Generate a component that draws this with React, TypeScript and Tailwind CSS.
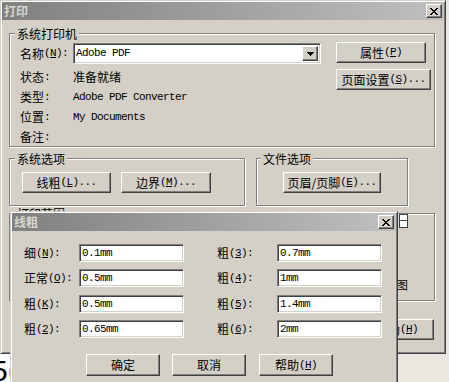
import React from "react";

const cjk = "font-['Noto_Sans_CJK_SC',sans-serif] text-[12px]";
const mono = "font-['Liberation_Mono',monospace] text-[11px] tracking-[-0.6px]";
const raised =
  "bg-[#d4d0c8] border border-t-white border-l-white border-r-[#404040] border-b-[#404040] shadow-[inset_-1px_-1px_0_#808080]";
const sunken =
  "bg-white border border-t-[#808080] border-l-[#808080] border-r-white border-b-white shadow-[inset_1px_1px_0_#404040,inset_-1px_-1px_0_#d4d0c8]";
const frame =
  "bg-[#d4d0c8] border border-t-[#d4d0c8] border-l-[#d4d0c8] border-r-[#404040] border-b-[#404040] shadow-[inset_1px_1px_0_#ffffff,inset_-1px_-1px_0_#808080] p-[1px]";
const group = "border border-[#808080] shadow-[1px_1px_0_#ffffff,inset_1px_1px_0_#ffffff]";
const legend = "font-['Noto_Sans_CJK_SC',sans-serif] text-[12px] leading-[13px] px-[2px] bg-[#d4d0c8] text-black";

// (N): style mnemonic, half-width like the old bitmap font
function Key({ k, tail = "" }: { k: string; tail?: string }) {
  return (
    <span className={mono}>
      (<span className="underline underline-offset-[1px]">{k}</span>){tail}
    </span>
  );
}

function CloseX() {
  return (
    <svg width="8" height="7" viewBox="0 0 8 7" shapeRendering="crispEdges">
      <path
        fill="#000"
        d="M0 0h2v1H0z M6 0h2v1H6z M1 1h2v1H1z M5 1h2v1H5z M2 2h4v1H2z M3 3h2v1H3z M2 4h4v1H2z M1 5h2v1H1z M5 5h2v1H5z M0 6h2v1H0z M6 6h2v1H6z"
      />
    </svg>
  );
}

function TitleBar({ title }: { title: string }) {
  return (
    <div className="h-[18px] flex items-center justify-between bg-linear-to-r from-[#808080] to-[#c0c0c0] pl-[2px] pr-[2px]">
      <span className={cjk + " font-bold leading-[18px] text-[#d8d6d0]"}>{title}</span>
      <div className={raised + " w-[16px] h-[14px] flex items-center justify-center"}>
        <CloseX />
      </div>
    </div>
  );
}

function Btn({ w, h = "h-[21px]", children }: { w: string; h?: string; children: React.ReactNode }) {
  return (
    <div className={raised + " " + w + " " + h + " flex items-center justify-center text-black"}>
      {children}
    </div>
  );
}

function InfoRow({ label, children }: { label: string; children: React.ReactNode }) {
  return (
    <div className="flex items-center h-[20px] text-black">
      <span className="w-[53px] flex items-center">
        <span className={cjk}>{label}</span>
        <span className={mono}>:</span>
      </span>
      {children}
    </div>
  );
}

function Field({ value }: { value: string }) {
  return (
    <div className={sunken + " w-[105px] h-[18px] flex items-center pl-[2px]"}>
      <span className={mono + " text-black"}>{value}</span>
    </div>
  );
}

function ThickRow({ l, lk, lv, r, rk, rv, mt }: { l: string; lk: string; lv: string; r: string; rk: string; rv: string; mt: string }) {
  return (
    <div className={"flex items-center h-[18px] text-black " + mt}>
      <span className="w-[55px] flex items-center">
        <span className={cjk}>{l}</span>
        <Key k={lk} tail=":" />
      </span>
      <Field value={lv} />
      <span className="ml-[33px] w-[60px] flex items-center">
        <span className={cjk}>{r}</span>
        <Key k={rk} tail=":" />
      </span>
      <Field value={rv} />
    </div>
  );
}

function MainDialog() {
  return (
    <div className={frame + " w-[446px] h-[354px] flex flex-col"}>
      <TitleBar title="打印" />

      {/* 系统打印机 */}
      <fieldset className={group + " ml-[7px] mt-[7px] w-[426px] h-[120px]"}>
        <legend className={legend + " ml-[5px]"}>系统打印机</legend>
        <div className="flex pl-[10px]">
          <div className="flex flex-col pt-[3px] w-[301px]">
            <div className="flex items-center h-[21px] text-black">
              <span className="w-[53px] flex items-center">
                <span className={cjk}>名称</span>
                <Key k="N" tail=":" />
              </span>
              <div className={sunken + " w-[248px] h-[21px] flex items-stretch p-[2px]"}>
                <span className={mono + " flex-1 flex items-center pl-[0px] text-black"}>Adobe PDF</span>
                <div className={raised + " w-[16px] flex items-center justify-center"}>
                  <svg width="7" height="4" viewBox="0 0 7 4" shapeRendering="crispEdges">
                    <path fill="#000" d="M0 0h7v1H0z M1 1h5v1H1z M2 2h3v1H2z M3 3h1v1H3z" />
                  </svg>
                </div>
              </div>
            </div>
            <div className="mt-[3px]">
              <InfoRow label="状态">
                <span className={cjk}>准备就绪</span>
              </InfoRow>
              <InfoRow label="类型">
                <span className={mono}>Adobe PDF Converter</span>
              </InfoRow>
              <InfoRow label="位置">
                <span className={mono}>My Documents</span>
              </InfoRow>
              <InfoRow label="备注">
                <span />
              </InfoRow>
            </div>
          </div>
          <div className="ml-[15px] pt-[2px] flex flex-col gap-[6px]">
            <Btn w="w-[90px]">
              <span className={cjk}>属性</span>
              <Key k="P" />
            </Btn>
            <Btn w="w-[95px]">
              <span className={cjk}>页面设置</span>
              <Key k="S" tail="..." />
            </Btn>
          </div>
        </div>
      </fieldset>

      {/* 系统选项 / 文件选项 */}
      <div className="flex ml-[7px] mt-[5px]">
        <fieldset className={group + " w-[236px] h-[54px]"}>
          <legend className={legend + " ml-[5px]"}>系统选项</legend>
          <div className="flex gap-[10px] pl-[12px] pt-[7px]">
            <Btn w="w-[89px]">
              <span className={cjk}>线粗</span>
              <Key k="L" tail="..." />
            </Btn>
            <Btn w="w-[90px]">
              <span className={cjk}>边界</span>
              <Key k="M" tail="..." />
            </Btn>
          </div>
        </fieldset>
        <fieldset className={group + " ml-[11px] w-[152px] h-[54px]"}>
          <legend className={legend + " ml-[4px]"}>文件选项</legend>
          <div className="flex justify-center pt-[7px]">
            <Btn w="w-[98px]">
              <span className={cjk}>页眉/页脚</span>
              <Key k="E" tail="..." />
            </Btn>
          </div>
        </fieldset>
      </div>

      {/* 打印范围, mostly hidden by the 线粗 window */}
      <fieldset className={group + " ml-[7px] mt-[1px] w-[426px] h-[94px]"}>
        <legend className={legend + " ml-[5px]"}>打印范围</legend>
        <div className="flex flex-col items-end pr-[26px]">
          <div className="-mt-[6px] w-[9px] h-[14px] flex flex-col">
            <div className="h-[7px] border border-[#404040] bg-white" />
            <div className="h-[7px] border border-[#404040] border-t-0 bg-white" />
          </div>
          <span className={cjk + " mt-[51px] leading-[12px] text-black"}>图</span>
        </div>
      </fieldset>

      <div className="flex justify-end pr-[10px] mt-[18px]">
        <Btn w="w-[74px]">
          <span className={cjk}>帮助</span>
          <Key k="H" />
        </Btn>
      </div>
    </div>
  );
}

function LineDialog() {
  return (
    <div className={frame + " absolute left-[10px] top-[211px] w-[388px] h-[180px] flex flex-col"}>
      <TitleBar title="线粗" />
      <div className="pl-[12px] mt-[13px] flex flex-col">
        <ThickRow l="细" lk="N" lv="0.1mm" r="粗" rk="3" rv="0.7mm" mt="" />
        <ThickRow l="正常" lk="O" lv="0.5mm" r="粗" rk="4" rv="1mm" mt="mt-[7px]" />
        <ThickRow l="粗" lk="K" lv="0.5mm" r="粗" rk="5" rv="1.4mm" mt="mt-[8px]" />
        <ThickRow l="粗" lk="2" lv="0.65mm" r="粗" rk="6" rv="2mm" mt="mt-[7px]" />
      </div>
      <div className="flex pl-[74px] mt-[16px]">
        <Btn w="w-[74px]" h="h-[22px]">
          <span className={cjk}>确定</span>
        </Btn>
        <div className="ml-[12px]">
          <Btn w="w-[74px]" h="h-[22px]">
            <span className={cjk}>取消</span>
          </Btn>
        </div>
        <div className="ml-[13px]">
          <Btn w="w-[74px]" h="h-[22px]">
            <span className={cjk}>帮助</span>
            <Key k="H" />
          </Btn>
        </div>
      </div>
    </div>
  );
}

export default function App() {
  return (
    <div className="relative w-[449px] h-[382px] overflow-hidden bg-[#e9e7df]">
      <MainDialog />
      {/* a document peeking out behind the dialogs */}
      <div className="w-[60px] h-[28px] bg-white overflow-hidden">
        <span className="block -ml-[9px] font-['Liberation_Sans',sans-serif] text-[30px] leading-[34px] text-black">5(</span>
      </div>
      <LineDialog />
    </div>
  );
}
